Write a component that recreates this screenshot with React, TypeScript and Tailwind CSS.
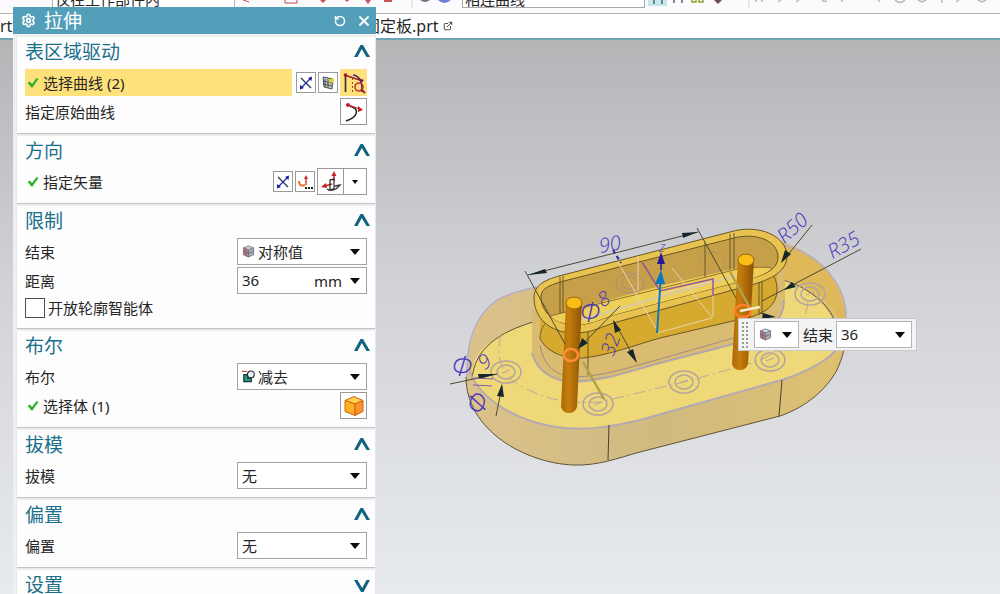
import React from 'react'
import { ExternalLink, RotateCcw, Settings, X } from 'lucide-react'

interface SectionProps {
  title: string
  collapsed?: boolean
  children?: React.ReactNode
}

const Section: React.FC<SectionProps> = ({ title, collapsed = false, children }) => {
  return (
    <section className="bg-[#fdfdfe] pr-2 pb-[7px] pl-2 shadow-[0_1px_1px_#c4c4c6]">
      <div className="flex h-[31px] items-center justify-between pb-[2px]">
        <h2 className="text-[19px] leading-7 text-[#1a6f8b]">{title}</h2>
        <button aria-label={title} aria-expanded={!collapsed} className="-mr-1 h-4 w-[18px]">
          <svg viewBox="0 0 18 16" className={collapsed ? 'h-4 w-[18px] rotate-180' : 'h-4 w-[18px]'}>
            <path d="M1 13 7.500 1h2.500L17 13h-3.500L8.800 5 4.500 13Z" fill="#116480" />
          </svg>
        </button>
      </div>
      {children}
    </section>
  )
}

const Check = () => (
  <svg viewBox="0 0 12 12" className="mr-1 ml-[2px] h-3 w-3">
    <path d="M0.500 6 3 4.500l2 2.500L9.500 1l2 1L5 11Z" fill="#2cb52c" />
  </svg>
)

const ReverseIcon = () => (
  <svg viewBox="0 0 18 18" className="h-[18px] w-[18px] shrink-0" fill="none">
    <path d="M4 4 14 14" stroke="#2b3550" strokeWidth="1.200" />
    <path d="M4 14 14 4" stroke="#2727b0" strokeWidth="1.200" />
    <path d="M11 4 15 2.500 14.500 7ZM3 11l4 3-4 1.500Z" fill="#1e1e9e" />
  </svg>
)

const CubeIcon = () => (
  <svg viewBox="0 0 14 14" className="h-[13px] w-[13px]">
    <path d="M7 1 12.500 3 7 5.200 1.500 3Z" fill="#d2d6da" />
    <path d="M1.500 3 7 5.200V13L1.500 10.500Z" fill="#c97583" />
    <path d="M7 5.200 12.500 3v7.500L7 13Z" fill="#a5b0bd" />
    <path d="M7 1 12.500 3v7.500L7 13 1.500 10.500V3ZM1.500 3 7 5.200 12.500 3M7 5.200V13M4 4v8M1.500 7 7 9l5.500-2" fill="none" stroke="#5d6570" strokeWidth="0.800" />
  </svg>
)

const SubtractIcon = () => (
  <svg viewBox="0 0 14 14" className="h-[13px] w-[13px]" fill="none">
    <path d="M0 1.500h5" stroke="#d43a3a" strokeWidth="1.300" />
    <path d="M2 5h8v7.500H2Z" fill="#2b9d80" stroke="#17343a" strokeWidth="1.400" />
    <circle cx="9.500" cy="4.800" r="3.700" fill="#eef3f3" stroke="#26343c" strokeWidth="1.200" />
    <path d="M6 5v4h3.500" stroke="#17343a" />
  </svg>
)

const Arrow = () => (
  <svg viewBox="0 0 10 6" className="pointer-events-none h-[6px] w-[10px] shrink-0">
    <path d="M0 0h10L5 6Z" fill="#0c0c0c" />
  </svg>
)

interface IconButtonProps {
  label: string
  large?: boolean
  active?: boolean
  children: React.ReactNode
}

const IconButton: React.FC<IconButtonProps> = ({ label, large, active, children }) => (
  <button
    aria-label={label}
    className={`flex items-center justify-center border ${large ? 'h-[27px] w-[27px]' : 'h-[21px] w-5'} ${active ? 'border-[#ffe082] bg-[#ffe07c]' : 'border-[#9a9a9c] bg-white'}`}
  >
    {children}
  </button>
)

interface SelectRowProps {
  id: string
  label: string
  value: string
  icon?: React.ReactNode
}

const SelectRow: React.FC<SelectRowProps> = ({ id, label, value, icon }) => (
  <div className="flex h-[29px] items-center justify-between">
    <label htmlFor={id}>{label}</label>
    <div className="relative flex h-[27px] w-[130px] items-center border border-[#a3a3a5] bg-white">
      {icon && <span className="pointer-events-none absolute left-1">{icon}</span>}
      <select id={id} className={`h-full w-full appearance-none bg-transparent outline-none ${icon ? 'pl-5' : 'pl-1'}`}>
        <option>{value}</option>
      </select>
      <span className="pointer-events-none absolute right-[6px] flex">
        <Arrow />
      </span>
    </div>
  </div>
)

const ExtrudePanel = () => {
  return (
    <aside className="absolute top-[7px] bottom-0 left-[13px] flex w-[363px] flex-col overflow-hidden bg-[#eeeff1] text-[15px] leading-5 text-[#262626]">
      <header className="flex h-[27px] shrink-0 items-center bg-[#539fb9] pr-[2px] pl-2 text-white">
        <Settings size={15} strokeWidth={2.6} />
        <h1 className="ml-2 flex-1 text-[19px] leading-6">拉伸</h1>
        <button aria-label="重置" className="mr-1 flex h-5 w-5 items-center justify-center">
          <RotateCcw size={12} strokeWidth={3} />
        </button>
        <button aria-label="关闭" className="flex h-5 w-5 items-center justify-center">
          <X size={16} strokeWidth={2.8} />
        </button>
      </header>

      <div className="flex flex-1 flex-col gap-[3px] pt-[3px] pr-px pl-1">
        <Section title="表区域驱动">
          <div className="flex h-[29px] items-center">
            <div className="mr-1 flex h-[27px] flex-1 items-center bg-[#ffe17b]">
              <Check />
              选择曲线 (2)
            </div>
            <div className="flex items-center gap-[2px]">
              <IconButton label="反向">
                <ReverseIcon />
              </IconButton>
              <IconButton label="绘制截面">
                <svg viewBox="0 0 16 16" className="h-4 w-4 shrink-0" fill="none">
                  <path d="M3 2 13 4l-1 10-8-2Z" fill="#c3c8ba" stroke="#4d5156" />
                  <path d="M5 4v8M8 4v9M3 6l9 2M3 9l9 2" stroke="#4d5156" />
                  <path d="M11 1l1 3 3 0-2 2 1 3-3-2-2 1 1-3-2-1h3Z" fill="#e6d829" />
                </svg>
              </IconButton>
              <IconButton label="曲线" large active>
                <svg viewBox="0 0 24 24" className="h-6 w-6 shrink-0" fill="none">
                  <path d="M3.500 4v17" stroke="#332a35" strokeWidth="1.600" />
                  <path d="M2 4 21 10" stroke="#ae1c28" strokeWidth="1.800" />
                  <path d="M11 4C18 5 20 10 20 21" stroke="#38237b" strokeWidth="1.300" />
                  <circle cx="17" cy="16" r="4" stroke="#c3302b" strokeWidth="1.600" />
                  <path d="M19 18 23 22" stroke="#9c1f28" strokeWidth="1.800" />
                  <path d="M10.500 7v15" stroke="#725d25" strokeDasharray="2 2" />
                  <circle cx="3.500" cy="4" r="1.800" fill="#a51924" />
                  <path d="M16 7l6 2-3 3Z" fill="#6b1f51" />
                </svg>
              </IconButton>
            </div>
          </div>
          <div className="flex h-[29px] items-center justify-between">
            <span>指定原始曲线</span>
            <IconButton label="指定原始曲线" large>
              <svg viewBox="0 0 24 24" className="h-6 w-6 shrink-0" fill="none">
                <path d="M8 6C18 9 16 17 4 21" stroke="#222" strokeWidth="1.500" />
                <path d="M6 5 18 9" stroke="#c71c23" strokeWidth="1.300" />
                <path d="M16 6l5 4-5 2Z" fill="#c71c23" />
                <circle cx="6" cy="5" r="2" fill="#c71c23" />
              </svg>
            </IconButton>
          </div>
        </Section>

        <Section title="方向">
          <div className="flex h-[29px] items-center">
            <Check />
            <span className="flex-1">指定矢量</span>
            <div className="flex items-center gap-[2px]">
              <IconButton label="反向">
                <ReverseIcon />
              </IconButton>
              <IconButton label="矢量对话框">
                <svg viewBox="0 0 16 16" className="h-4 w-4 shrink-0" fill="none">
                  <path d="M9 11V3" stroke="#cf2428" strokeWidth="1.300" />
                  <path d="M7 5 9 1l2 4Z" fill="#cf2428" />
                  <path d="M2 7c0 5 3 5 6 4" stroke="#ea7a2a" strokeWidth="2" />
                  <path d="M8 14h2m1 0h2m1 0h2" stroke="#222" strokeWidth="2" />
                </svg>
              </IconButton>
              <div className="flex">
                <IconButton label="自动判断矢量" large>
                  <svg viewBox="0 0 24 24" className="h-6 w-6 shrink-0" fill="none">
                    <path d="M15 3v8" stroke="#c51f27" strokeWidth="1.500" />
                    <path d="M12.500 6l2.500-5 2.500 5ZM2 17l5-4 1 5Z" fill="#c51f27" />
                    <path d="M6 16l7-2" stroke="#c51f27" strokeWidth="1.500" />
                    <path d="M11 10l4-1v10l-4 1ZM8 19c4 3 9 1 13-4l-5 1" stroke="#333" strokeWidth="1.300" />
                  </svg>
                </IconButton>
                <button aria-label="矢量类型" className="flex h-[27px] w-[23px] items-center justify-center border border-l-0 border-[#9a9a9c] bg-white">
                  <svg viewBox="0 0 6 4" className="h-1 w-[6px]">
                    <path d="M0 0h6L3 4Z" fill="#0c0c0c" />
                  </svg>
                </button>
              </div>
            </div>
          </div>
        </Section>

        <Section title="限制">
          <SelectRow id="limit-end" label="结束" value="对称值" icon={<CubeIcon />} />
          <div className="flex h-[29px] items-center justify-between">
            <label htmlFor="distance">距离</label>
            <div className="flex h-[27px] w-[130px] items-center border border-[#a3a3a5] bg-white pr-[6px] pl-1">
              <input id="distance" defaultValue="36" className="min-w-0 flex-1 pb-[2px] outline-none" />
              <span>mm</span>
              <button aria-label="单位" className="ml-2 flex">
                <Arrow />
              </button>
            </div>
          </div>
          <label className="flex h-[26px] items-center gap-[3px]">
            <input type="checkbox" className="h-5 w-5 appearance-none border border-[#4c4c4c] bg-white" />
            开放轮廓智能体
          </label>
        </Section>

        <Section title="布尔">
          <SelectRow id="boolean" label="布尔" value="减去" icon={<SubtractIcon />} />
          <div className="flex h-[29px] items-center">
            <Check />
            <span className="flex-1">选择体 (1)</span>
            <IconButton label="选择体" large>
              <svg viewBox="0 0 22 22" className="h-[22px] w-[22px] shrink-0" stroke="#d4600d" strokeLinejoin="round">
                <path d="M11 1.500 20 5.500l-8 3.500-10-3.500Z" fill="#ffd24c" />
                <path d="M2 5.500l10 3.500v11.500L2 16.500Z" fill="#ffb126" />
                <path d="M12 9l8-3.500v11l-8 4Z" fill="#f9932a" />
              </svg>
            </IconButton>
          </div>
        </Section>

        <Section title="拔模">
          <SelectRow id="draft" label="拔模" value="无" />
        </Section>

        <Section title="偏置">
          <SelectRow id="offset" label="偏置" value="无" />
        </Section>

        <Section title="设置" collapsed />
      </div>
    </aside>
  )
}

const holes = [
  [506, 372],
  [598, 404],
  [684, 382],
  [770, 360],
  [810, 294],
]

const Model = () => {
  return (
    <svg viewBox="440 200 430 280" className="absolute top-40 left-[440px] h-[280px] w-[430px]" fill="none">
      <defs>
        <linearGradient id="pin" x1="0" x2="1" y1="0" y2="0">
          <stop offset="0" stopColor="#a86808" />
          <stop offset="0.350" stopColor="#c67e0c" />
          <stop offset="1" stopColor="#8d5305" />
        </linearGradient>
        <linearGradient id="side" x1="0" x2="1" y1="0" y2="0">
          <stop offset="0" stopColor="#dbc28a" />
          <stop offset="0.500" stopColor="#d0ba80" />
          <stop offset="1" stopColor="#dfc070" />
        </linearGradient>
      </defs>

      {/* plate body */}
      <path
        d="M466 377C466 352 472 318 497 300C509 292 522 290 537 287L730 237C790 228 846 270 846 313C846 330 847 346 837 370C826 390 806 407 780 416L640 452C618 458 598 466 573 465C525 463 466 430 466 377Z"
        fill="url(#side)"
      />
      <path d="M466 377C466 430 525 463 573 465C598 466 618 458 640 452L780 416C806 407 826 390 837 370C842 358 845 350 845 338" stroke="#5c5237" />
      <path d="M783 245C820 254 850 285 846 340C842 310 815 284 783 279Z" fill="#dfb85a" />
      <path d="M467 377C466 345 474 316 497 300Q512 292 537 287M783 245C820 254 848 285 846 322" stroke="#b7acc7" strokeWidth="1.500" />

      {/* top face */}
      <path d="M472 370C474 348 500 332 533 322L740 272C800 272 838 306 838 345C830 360 806 372 782 380L640 420C610 428 590 430 564 428C515 423 480 398 472 378Z" fill="#efd877" />
      <path d="M472 380C474 348 500 332 533 322M783 280C808 287 830 305 835 322" stroke="#5c5237" />
      <path d="M470 372C480 398 515 423 564 428C590 430 610 427 640 420L782 380C806 372 830 360 840 345" stroke="#b3a9b2" strokeWidth="2" />
      <path d="M609 425 608 460M782 380 779 416" stroke="#494029" />
      <path d="M501 335C496 357 499 376 526 389C545 397 558 404 600 402L684 382L745 365C780 356 807 330 808 300" stroke="#b9ab9c" strokeDasharray="12 4 2 4" />

      {holes.map(([x, y]) => (
        <g key={x} stroke="#b3a49f" strokeWidth="1.500">
          <ellipse cx={x} cy={y} rx="15" ry="11" />
          <ellipse cx={x} cy={y} rx="9" ry="7" />
          <path d={`M${x - 4} ${y + 1}l8-3`} strokeWidth="1" />
        </g>
      ))}

      {/* lower slot */}
      <path d="M532 310V353C537 371 553 382 575 382C610 379 630 371 660 363L737 342C765 337 785 320 785 300V260L600 325Z" fill="#d6b971" fillOpacity="0.900" />
      <path d="M532 353C537 371 553 382 575 382C610 379 630 371 660 363L737 343C768 336 784 320 784 300" stroke="#b3a5ad" strokeWidth="2" />
      <path d="M540 345C544 367 556 376 575 377C605 376 630 367 660 359L737 337" stroke="#a08a86" />

      {/* front wall */}
      <path d="M540 312V338C545 351 563 359 583 358C610 355 635 345 660 338L737 320C763 316 777 306 777 290V262L590 322Z" fill="#d6a92f" />
      <path d="M540 338C545 351 563 359 583 358C610 355 635 345 660 338L737 320C763 316 777 306 777 290C777 284 776 279 772 274" stroke="#6d5727" />
      <path d="M556 316C546 320 540 328 540 338" stroke="#7d6430" />

      {/* rim */}
      <path
        d="M534 298C534 285 545 280 559 276L730 232C760 223 787 237 787 256C787 272 770 281 740 288L617 322C600 327 592 333 575 333C550 333 534 318 534 298Z"
        fill="#e8c350"
        stroke="#6a5627"
      />
      {/* cavity */}
      <path
        d="M541 297C541 288 549 286 560 282L730 239C756 231 778 241 778 257C778 269 766 275 745 280L617 314C600 319 590 325 575 325C553 324 541 311 541 297Z"
        fill="#c69f49"
        stroke="#6a5627"
      />
      <path d="M550 316 562 313L660 286L738 268Q762 266 772 268Q764 276 745 280L617 314C600 319 590 325 575 325Q558 324 550 316Z" fill="#efd057" />
      <path d="M550 316 562 313L738 269Q762 266 772 268" stroke="#8f7330" />
      <path d="M580 320 660 297L738 275" stroke="#dfcb8c" strokeWidth="3" />
      <path d="M560 277V314M563 276V313M730 234V270M734 233V269M705 243V277M588 332V375M759 282V315M762 281V314" stroke="#6a5627" />
      <g stroke="#b08a86">
        <ellipse cx="630" cy="283" rx="14" ry="10" />
        <ellipse cx="630" cy="283" rx="8" ry="6" />
        <ellipse cx="713" cy="262" rx="13" ry="10" strokeOpacity="0.500" />
      </g>

      {/* sketch lines */}
      <path d="M638 256V291M618 262 658 332M657 333 712 318M656 295 713 281V317M672 268 712 317" stroke="#e8d3b2" />
      <path d="M642 262 660 291 713 279V296" stroke="#94569a" strokeWidth="1.500" />

      {/* pins */}
      <path d="M566 303 561 407Q563 413 569 413T577 407L582 303Z" fill="url(#pin)" />
      <ellipse cx="574" cy="303" rx="8" ry="6" fill="#f9bd15" stroke="#9d6409" />
      <path d="M738 260 732 364Q734 370 740 370T748 364L754 260Z" fill="url(#pin)" />
      <ellipse cx="746" cy="260" rx="8" ry="6" fill="#f9bd15" stroke="#9d6409" />
      <path d="M728 268 750 308M583 362 604 399" stroke="#b39f4d" strokeWidth="2.500" />
      <ellipse cx="571" cy="355" rx="7" ry="6" stroke="#ff8c38" strokeWidth="2.500" />
      <ellipse cx="743" cy="311" rx="8" ry="6" stroke="#ff7d2b" strokeWidth="2.500" />
      <path d="M740 311 760 307" stroke="#f6ead0" strokeWidth="2.500" />

      {/* dimensions */}
      <path d="M528 275 698 232M525 271 565 344M697 228 736 298M620 306 580 347M614 321 636 361M450 384 497 374M496 416 502 386M812 225 783 261M861 249 762 301M760 313 775 317" stroke="#4a4a32" />
      <path
        d="M528 275 545 269 547 273ZM698 232 682 233 683 238ZM578 349 582 338 588 343ZM613 320 615 333 621 330ZM637 363 627 352 633 349ZM497 374 478 374 479 379ZM502 384 497 396 504 397ZM781 263 785 250 791 254ZM784 290 792 282 796 287ZM775 317 763 313 762 319Z"
        fill="#17252d"
      />

      {/* Z vector */}
      <path d="M657 333 661 275" stroke="#1478b4" strokeWidth="2" />
      <path d="M655 284 661 270 665 284Z" fill="#0c75c1" />
      <path d="M661 270V258" stroke="#271a9a" strokeWidth="1.500" />
      <path d="M657 264 661 252 665 264Z" fill="#271a9a" />
      <path d="M613 250 621 263" stroke="#2c249a" strokeWidth="2" strokeDasharray="4 3" />
      <path d="M474 378 493 379M473 385 492 386" stroke="#7d5ba6" />

      <g fill="#4a33bd" fontFamily="'Open Sans', 'Noto Sans', sans-serif" fontStyle="italic" fontWeight="300" fontSize="20" textAnchor="middle">
        <text transform="translate(611 251) rotate(-10)">90</text>
        <text transform="translate(797 233) rotate(-42)">R50</text>
        <text transform="translate(847 251) rotate(-30)">R35</text>
        <text transform="translate(617 347) rotate(-70)">32</text>
        <text transform="translate(590 322) rotate(0)" fontSize="28">Φ</text>
        <text transform="translate(607 305) rotate(-30)">8</text>
        <text transform="translate(461 376) rotate(5)" fontSize="28">Φ</text>
        <text transform="translate(486 408) rotate(-60)" fontSize="28">Φ</text>
        <text transform="translate(489 367) rotate(-40)">9</text>
        <text x="662" y="252" fontSize="11">Z</text>
      </g>
    </svg>
  )
}

const ValueBar = () => {
  return (
    <div className="absolute top-[278px] left-[738px] flex h-[33px] items-center border border-[#c9c9cb] bg-[#f3f3f4] pr-1 text-[15px] leading-5 text-[#262626]">
      <div className="mr-[5px] ml-[2px] h-[27px] w-2 bg-[radial-gradient(#9b9b9d_1px,transparent_1px)] bg-[length:4px_4px]"></div>
      <button aria-label="结束类型" className="mr-1 flex h-[27px] w-[45px] items-center justify-between border border-[#b5b5b7] bg-white pr-[6px] pl-1">
        <CubeIcon />
        <Arrow />
      </button>
      <label htmlFor="end-value">结束</label>
      <div className="ml-[3px] flex h-[27px] w-[76px] items-center border border-[#b5b5b7] bg-white pr-[6px] pl-1">
        <input id="end-value" defaultValue="36" className="min-w-0 flex-1 pb-[2px] outline-none" />
        <button aria-label="选项" className="flex">
          <Arrow />
        </button>
      </div>
    </div>
  )
}

export default function App() {
  return (
    <div className="relative flex h-screen flex-col overflow-hidden bg-white font-['Noto_Sans','Noto_Sans_CJK_SC',sans-serif]">
      <div className="flex h-[14px] shrink-0 items-start overflow-hidden border-b border-[#b4b4b8] bg-[#fbfafc] text-[15px] leading-5 text-[#262626]">
        <div className="-mt-3 ml-[52px] h-5 w-[183px] border border-[#b4b4b6] bg-white pl-[2px]">
          <span>仅在工作部件内</span>
        </div>
        <svg viewBox="235 0 225 8" className="h-2 w-[225px]" fill="none">
          <path d="M243 0l6 2M285 0v3h12V0" stroke="#c84a4a" />
          <path d="M320 0l3 3 3-3ZM345 0l2 2 2-2ZM365 0l3 4 3-4ZM384 0v2h8V0" fill="#c5545a" />
          <path d="M412 0v8" stroke="#d5d5d7" />
          <path d="M420 0q5 4 10 0Z" fill="#77777c" />
          <path d="M438 0q6 6 13 0Z" fill="#6d7fd0" />
        </svg>
        <div className="-mt-3 ml-[2px] h-5 w-[183px] border border-[#a9a9ab] bg-white pl-[2px]">
          <span>相连曲线</span>
        </div>
        <svg viewBox="645 0 355 8" className="h-2 w-[355px]" fill="none">
          <path d="M648 0h19v6h-19Z" fill="#c5e6ea" />
          <path d="M654 0v4M662 0v4M674 0v3M682 0v3" stroke="#4f6a70" strokeWidth="1.500" />
          <path d="M692 0v2h4V0m3 0v2h4V0" stroke="#8fa32c" strokeWidth="1.500" />
          <path d="M714 0l4 4 4-4Z" fill="#6e4c54" />
          <path d="M749 0v8" stroke="#d5d5d7" />
          <path d="M756 0v2m6-2v2m19-2-3 2m21-2-3 2m26-2q2 2 5 1m15-1v2m37-2v2m16-2q5 5 10 0m13 0 4 2 4-2m16 0v3m17-3-3 2m22-2 4 2 4-2" stroke="#bcb6bc" strokeWidth="1.500" />
        </svg>
      </div>

      <nav className="flex h-6 shrink-0 items-center bg-white text-base leading-5 text-[#262626]">
        <a href="#left" className="w-[364px]">rt</a>
        <a href="#part" className="flex items-center gap-1">
          固定板.prt
          <ExternalLink size={10} />
        </a>
      </nav>

      <main className="relative flex-1 border-t-2 border-[#6fa4b5] bg-linear-to-b from-[#b5b5b8] via-[#d2d3d7] via-45% to-[#e8ebee]">
        <Model />
        <ValueBar />
      </main>

      <ExtrudePanel />
    </div>
  )
}
